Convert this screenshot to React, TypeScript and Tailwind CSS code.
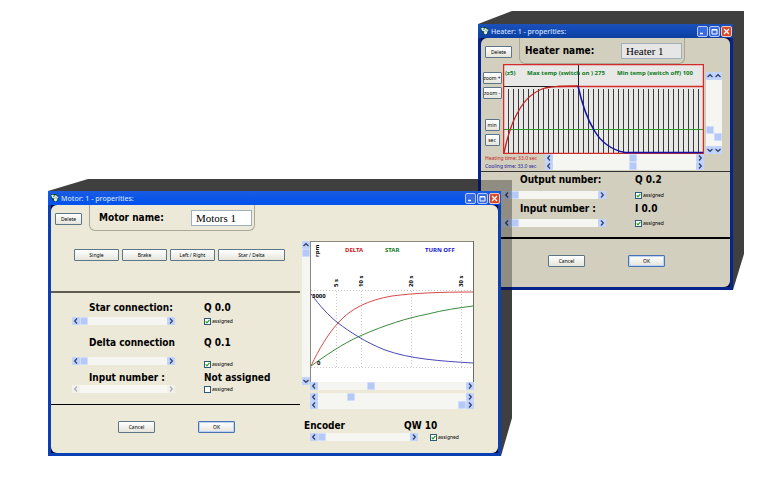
import type { ReactNode } from "react";

type Tone = "motor" | "heater";

const fontStack = "font-['Noto_Sans','Open_Sans',sans-serif]";
const boldText =
  "font-['DejaVu_Sans_Condensed','DejaVu_Sans',sans-serif] text-[10px] leading-[14px] font-bold whitespace-nowrap";

const XpButton = ({
  children,
  className = "w-[37px]",
  focused = false,
}: {
  children: ReactNode;
  className?: string;
  focused?: boolean;
}) => (
  <button
    type="button"
    className={`flex h-3 shrink-0 items-center justify-center rounded-[1px] border bg-gradient-to-b from-white to-[#e6e5dc] text-[5px] leading-none whitespace-nowrap text-black ${
      focused ? "border-[#4a73b5] ring-1 ring-inset ring-[#bdd2f2]" : "border-[#5b7687]"
    } ${className}`}
  >
    {children}
  </button>
);

const Chevron = ({ d }: { d: string }) => (
  <svg viewBox="0 0 8 8" className="size-2" aria-hidden="true">
    <path d={d} fill="none" stroke="#33436e" strokeWidth="1.3" />
  </svg>
);

const arrows = {
  left: "M5 1.5 2.7 4 5 6.5",
  right: "M3 1.5 5.3 4 3 6.5",
  up: "M1.5 5 4 2.7 6.5 5",
  down: "M1.5 3 4 5.3 6.5 3",
};

const ScrollBar = ({
  label,
  value = 0,
  vertical = false,
  disabled = false,
  className = "",
}: {
  label: string;
  value?: number;
  vertical?: boolean;
  disabled?: boolean;
  className?: string;
}) => {
  const arrowClass = `size-2 shrink-0 rounded-[1px] ${disabled ? "bg-[#eeece0] opacity-40" : "bg-[#c1d3fb]"}`;
  return (
    <div
      className={`flex ${vertical ? "w-2 flex-col" : "h-2"} ${
        disabled ? "bg-[#f8f7f2]" : "bg-[#f5f5f2]"
      } ${className}`}
    >
      <button type="button" disabled={disabled} aria-label={`${label} decrease`} className={arrowClass}>
        <Chevron d={vertical ? arrows.up : arrows.left} />
      </button>
      <input
        type="range"
        aria-label={label}
        defaultValue={value}
        disabled={disabled}
        className={`m-0 min-h-0 min-w-0 flex-1 appearance-none bg-transparent [&::-webkit-slider-thumb]:size-2 [&::-webkit-slider-thumb]:appearance-none [&::-webkit-slider-thumb]:rounded-[1px] [&::-webkit-slider-thumb]:border [&::-webkit-slider-thumb]:border-[#cfdcfb] [&::-webkit-slider-thumb]:bg-[#b4c9f5] disabled:[&::-webkit-slider-thumb]:opacity-0 ${
          vertical ? "w-2 [writing-mode:vertical-lr]" : "h-2"
        }`}
      />
      <button type="button" disabled={disabled} aria-label={`${label} increase`} className={arrowClass}>
        <Chevron d={vertical ? arrows.down : arrows.right} />
      </button>
    </div>
  );
};

const Assigned = ({ checked = true, className = "h-2" }: { checked?: boolean; className?: string }) => (
  <label className={`flex items-center gap-px text-[5px] leading-none ${className}`}>
    <span className="relative size-[7px]">
      <input
        type="checkbox"
        defaultChecked={checked}
        className="peer block size-[7px] appearance-none border border-[#2d5b7c] bg-white"
      />
      <svg viewBox="0 0 7 7" className="absolute inset-0 hidden peer-checked:block" aria-hidden="true">
        <path d="M1.7 3.3 3 4.8 5.4 1.9" fill="none" stroke="#21a121" strokeWidth="1.2" />
      </svg>
    </span>
    assigned
  </label>
);

const SettingRow = ({
  label,
  value,
  checked = true,
  disabled = false,
  className = "",
  controlClass = "",
  boxClass = "h-2",
}: {
  label: string;
  value: string;
  checked?: boolean;
  disabled?: boolean;
  className?: string;
  controlClass?: string;
  boxClass?: string;
}) => (
  <div className={`grid grid-cols-[132px_1fr] ${className}`}>
    <div className={`pl-[17px] ${boldText}`}>{label}</div>
    <div className={boldText}>{value}</div>
    <ScrollBar label={label} disabled={disabled} className={`w-[103px] ${controlClass}`} />
    <Assigned checked={checked} className={`${controlClass} ${boxClass}`} />
  </div>
);

const NameHeader = ({
  id,
  label,
  value,
  tone,
}: {
  id: string;
  label: string;
  value: string;
  tone: Tone;
}) => (
  <div className="flex items-start">
    <XpButton className="mt-2 ml-1 w-[27px]">Delete</XpButton>
    <div
      className={`ml-[7px] flex h-[26px] w-[166px] items-center justify-between rounded-b-md border border-t-0 border-[#a9a798] pr-[2px] ${
        tone === "motor" ? "pl-[9px]" : "pl-[5px]"
      }`}
    >
      <label htmlFor={id} className={boldText}>
        {label}
      </label>
      <input
        id={id}
        type="text"
        defaultValue={value}
        className={`h-4 w-[61px] border border-[#9fb0bd] px-1 font-['Liberation_Serif',serif] text-[11px] leading-none text-black ${
          tone === "motor" ? "bg-white" : "bg-[#e6e6e6]"
        }`}
      />
    </div>
  </div>
);

const TitleButtons = () => (
  <div className="flex gap-px">
    <button
      type="button"
      aria-label="Minimize"
      className="size-[11px] rounded-xs border border-[#b9cbf3] bg-[#3a6be0]"
    >
      <svg viewBox="0 0 9 9" aria-hidden="true">
        <path d="M2 6.5h3" stroke="#fff" strokeWidth="1.5" />
      </svg>
    </button>
    <button
      type="button"
      aria-label="Maximize"
      className="size-[11px] rounded-xs border border-[#b9cbf3] bg-[#3a6be0]"
    >
      <svg viewBox="0 0 9 9" aria-hidden="true">
        <path d="M2 2.5h5v4.5h-5z M2 3h5" fill="none" stroke="#fff" />
      </svg>
    </button>
    <button
      type="button"
      aria-label="Close"
      className="size-[11px] rounded-xs border border-[#f0c9bd] bg-[#d8482a]"
    >
      <svg viewBox="0 0 9 9" aria-hidden="true">
        <path d="M2 2l5 5M7 2l-5 5" stroke="#fff" strokeWidth="1.3" />
      </svg>
    </button>
  </div>
);

const AppIcon = () => (
  <svg viewBox="0 0 8 8" className="size-2" aria-hidden="true">
    <path d="M0 0h5l1 1.5h2L7 6 5 8 2 7 0 3z" fill="#11402f" />
    <path d="M0 1.5 2 .5l1.5 1.2L5 1l1 1.5 1.8.3-1.3 1.4L6 6.5 4.5 7.5 2.6 6l1-1.5L1.5 4z" fill="#dff0ee" />
    <path d="M2 1.8h1.6v1H2zM4.3 3.6l1.2-.5-.2 1.8z" fill="#2d8a55" />
  </svg>
);

const XpWindow = ({
  title,
  tone,
  children,
}: {
  title: string;
  tone: Tone;
  children: ReactNode;
}) => (
  <section
    className={`relative px-[3px] pb-[3px] text-black ${
      tone === "motor" ? "z-20 bg-[#0b3fb4]" : "z-10 bg-[#07238c]"
    }`}
  >
    <header
      className={`-mx-[3px] flex h-[14px] items-center justify-between pr-px pl-[3px] ${
        tone === "motor"
          ? "bg-gradient-to-b from-[#1b5ce0] via-[#0a55e8] to-[#0453ee]"
          : "bg-gradient-to-b from-[#1c51b8] via-[#1148b4] to-[#0c3f9f]"
      }`}
    >
      <div className="flex items-center gap-[2px]">
        <AppIcon />
        <h2 className="text-[7px] leading-none font-medium whitespace-nowrap text-[#d3e0fa]">{title}</h2>
      </div>
      <TitleButtons />
    </header>
    <div className="bg-[#05093a]">
      <div className={`rounded-md ${tone === "motor" ? "bg-[#ece9d8]" : "bg-[#d3cfbe]"}`}>{children}</div>
    </div>
  </section>
);

// dark block behind a window that gives it depth
const Extrusion = ({ points, viewBox }: { points: string; viewBox: string }) => (
  <svg
    viewBox={viewBox}
    preserveAspectRatio="none"
    className="absolute inset-0 z-0 size-full"
    aria-hidden="true"
  >
    <polygon points={points} fill="#3f3f3f" />
  </svg>
);

const HeaterChart = () => {
  const bars = Array.from({ length: 39 }, (_, i) => 6 + i * 5);
  return (
    <svg
      viewBox="0 0 201 90"
      className="block min-w-0 flex-1 self-start"
      role="img"
      aria-label="Heater temperature"
    >
      <rect width="201" height="90" fill="#e8e8e6" />
      {bars.map((x) => (
        <path key={x} d={`M${x - 0.5} 25V89`} stroke="#3a3a3a" />
      ))}
      <path d="M1 65.5H200" stroke="#2a962a" />
      <path d="M1 22.5H76M75.5 1V23" stroke="#222" />
      <path d="M55 22.5H200" stroke="#d42a2a" strokeWidth="1.5" />
      <rect x="0.5" y="0.5" width="200" height="89" fill="none" stroke="#d42a2a" strokeWidth="1.5" />
      <path d="M1 89C5 70 9 58 15 48C23 33 32 27 42 24C52 22 62 22 75 22" fill="none" stroke="#c41f1f" strokeWidth="1.3" />
      <path d="M75 22C80 44 86 58 91 66C99 80 109 86 122 88.5H200" fill="none" stroke="#1212a8" strokeWidth="1.5" />
      <g className="text-[6px] font-bold" fill="#0b7a1c">
        <text x="2" y="11">(z5)</text>
        <text x="24" y="11">Max temp (switch on ) 275</text>
        <text x="114" y="11">Min temp (switch off) 100</text>
      </g>
    </svg>
  );
};

const MotorChart = () => (
  <svg viewBox="0 0 164 141" className="block w-full" role="img" aria-label="Motor speed">
    <rect width="164" height="141" fill="#fff" />
    <path d="M0 0.5H164M0.5 0V141" stroke="#8a8a80" />
    <path d="M163.5 0V141" stroke="#6b6b64" />
    <path
      d="M1 49.5H163M1 126.5H163M26.5 50V126M51.5 50V126M101.5 50V126M151.5 50V126"
      stroke="#c9c9c9"
      strokeDasharray="1 2"
    />
    <path d="M1 125C9 108 18 93 28 82C40 68 58 59 82 55C105 52 130 51 163 51" fill="none" stroke="#d94a4a" />
    <path d="M1 125C15 115 32 103 50 95C75 84 97 77 118 73C133 69 148 67 163 65" fill="none" stroke="#3c8a3c" />
    <path d="M1 53C10 65 18 74 28 82C40 91 55 101 75 109C100 118 130 120 163 122" fill="none" stroke="#4a4ab8" />
    <g className="text-[6px] font-bold">
      <text x="35" y="11" fill="#d01818">DELTA</text>
      <text x="75" y="11" fill="#0b7a1c">STAR</text>
      <text x="115" y="11" fill="#1414c8">TURN OFF</text>
      <text x="2" y="57">3000</text>
      <text x="7" y="124">0</text>
      <text transform="translate(9 16) rotate(-90)">rpm</text>
      <text transform="translate(28 46) rotate(-90)">5 s</text>
      <text transform="translate(53 46) rotate(-90)">10 s</text>
      <text transform="translate(103 46) rotate(-90)">20 s</text>
      <text transform="translate(153 46) rotate(-90)">30 s</text>
    </g>
  </svg>
);

const DialogButtons = () => (
  <div className="flex gap-[43px] pt-4 pb-5 pl-[67px]">
    <XpButton>Cancel</XpButton>
    <XpButton focused>OK</XpButton>
  </div>
);

const HeaterWindow = () => (
  <XpWindow title="Heater: 1 - properities:" tone="heater">
    <NameHeader id="heater-name" label="Heater name:" value="Heater 1" tone="heater" />
    <div className="flex pr-2">
      <div className="flex w-[22px] shrink-0 flex-col items-center pt-2">
        <XpButton className="w-[19px]">zoom +</XpButton>
        <XpButton className="mt-[3px] w-[19px]">zoom -</XpButton>
        <XpButton className="mt-5 w-[15px]">min</XpButton>
        <XpButton className="mt-[3px] w-[15px]">sec</XpButton>
      </div>
      <HeaterChart />
      <div className="ml-[2px] flex pt-2">
        <ScrollBar label="Maximum temperature" vertical value={80} />
        <ScrollBar label="Minimum temperature" vertical value={92} />
      </div>
    </div>
    <div className="flex flex-col border-b border-[#333] pr-[26px] pb-px pl-1 text-[5px] leading-2">
      <div className="flex">
        <span className="w-[60px] text-[#c81e1e]">Heating time: 33.0 sec</span>
        <ScrollBar label="Heating time" value={56} className="flex-1" />
      </div>
      <div className="flex">
        <span className="w-[60px] text-[#1a1aa0]">Cooling time: 33.0 sec</span>
        <ScrollBar label="Cooling time" value={56} className="flex-1" />
      </div>
    </div>
    <div className="border-b-2 border-black pt-px pb-[10px] pl-[22px]">
      <SettingRow label="Output number:" value="Q 0.2" controlClass="mt-1" />
      <SettingRow label="Input number :" value="I 0.0" className="mt-[3px]" controlClass="mt-[3px]" />
    </div>
    <DialogButtons />
  </XpWindow>
);

const MotorWindow = () => (
  <XpWindow title="Motor: 1 - properities:" tone="motor">
    <div className="flex items-start">
      <div className="w-[249px] shrink-0">
        <NameHeader id="motor-name" label="Motor name:" value="Motors 1" tone="motor" />
        <div className="flex gap-[3px] border-b-2 border-[#5f5c50] pt-[18px] pb-[30px] pl-[23px]">
          <XpButton className="w-[45px]">Single</XpButton>
          <XpButton className="w-[45px]">Brake</XpButton>
          <XpButton className="w-[45px]">Left / Right</XpButton>
          <XpButton className="w-[67px]">Star / Delta</XpButton>
        </div>
        <div className="border-b border-black pt-2 pb-[11px] pl-[21px]">
          <SettingRow label="Star connection:" value="Q 0.0" controlClass="mt-[2px]" />
          <SettingRow
            label="Delta connection"
            value="Q 0.1"
            className="mt-[11px]"
            controlClass="mt-[7px]"
            boxClass="h-[14px]"
          />
          <SettingRow label="Input number :" value="Not assigned" checked={false} disabled />
        </div>
        <DialogButtons />
      </div>
      <div className="min-w-0 flex-1 pt-9 pr-6 pl-[2px]">
        <div className="flex">
          <ScrollBar label="Speed scale" vertical className="h-36" />
          <div className="min-w-0 flex-1">
            <MotorChart />
            <ScrollBar label="Delta curve" value={35} />
            <ScrollBar label="Star curve" value={21} className="mt-[3px]" />
            <ScrollBar label="Turn off curve" value={100} />
          </div>
        </div>
        <div className={`mt-[10px] grid grid-cols-[100px_1fr] pl-[2px] ${boldText}`}>
          <span>Encoder</span>
          <span>QW 10</span>
        </div>
        <div className="flex pl-2">
          <ScrollBar label="Encoder" className="w-[108px]" />
          <Assigned className="ml-3 h-2" />
        </div>
      </div>
    </div>
  </XpWindow>
);

const App = () => {
  return (
    <main className={`relative isolate min-h-screen bg-white ${fontStack}`}>
      <div className="absolute top-[11px] right-[35px] left-[478px] pt-[13px] pr-3">
        <Extrusion viewBox="0 0 267 278" points="0,13 34,0 266,0 266,242 255,278 0,278" />
        <HeaterWindow />
        <div className="absolute top-[169px] bottom-0 left-0 z-10 w-[34px] bg-black/32" />
      </div>
      <div className="absolute top-[179px] right-[268px] left-12 pt-3 pr-[11px]">
        <Extrusion viewBox="0 0 464 277" points="0,12 40,0 464,0 464,239 453,277 0,277" />
        <MotorWindow />
      </div>
    </main>
  );
};

export default App;
